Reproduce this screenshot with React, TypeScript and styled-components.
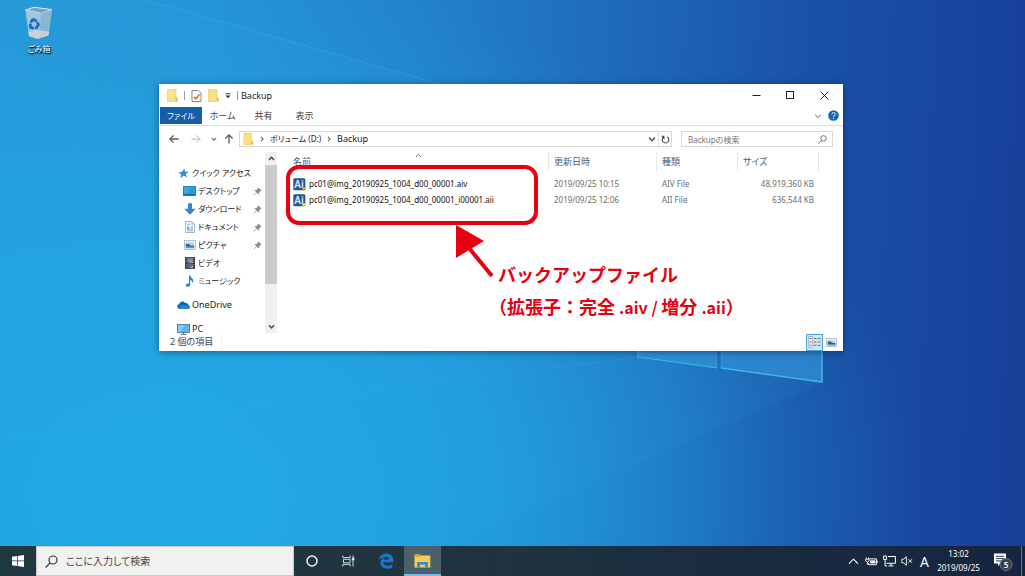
import React from "react";
import styled, { createGlobalStyle } from "styled-components";

const GlobalStyle = createGlobalStyle`
  *, *::before, *::after { box-sizing: border-box; }
  body {
    margin: 0;
    font-family: "Noto Sans", "Noto Sans CJK JP", sans-serif;
    font-size: 8px;
    font-feature-settings: "palt";
    color: #222;
  }
  button, input {
    font: inherit;
    font-feature-settings: inherit;
    color: inherit;
    margin: 0;
    padding: 0;
    border: 0;
    background: none;
  }
  svg { display: block; flex: none; }
`;

/* ---------- desktop ---------- */

const Screen = styled.div`
  position: relative;
  min-height: 100vh;
  display: flex;
  flex-direction: column;
  overflow: hidden;
  background:
    radial-gradient(ellipse 72% 90% at 18% 86%, #20a9e5 0%, rgba(32, 169, 229, 0.7) 45%, rgba(32, 169, 229, 0.2) 80%, rgba(32, 169, 229, 0) 100%),
    linear-gradient(92deg, #2698d8 0%, #2594d6 20%, #2283cb 40%, #1f6dbb 57%, #1a51a7 78%, #173f98 100%);
`;

const Wallpaper = styled.svg`
  position: absolute;
  inset: 0;
  width: 100%;
  height: 100%;
`;

const Desktop = styled.main`
  position: relative;
  flex: 1;
  padding: 84px 182px 40px 159px;
`;

const DesktopIcon = styled.button`
  position: absolute;
  left: 18px;
  top: 6px;
  width: 42px;
  display: flex;
  flex-direction: column;
  align-items: center;
  gap: 3px;
  color: #fff;
  line-height: 12px;
  text-shadow: 0 1px 2px #000, 1px 1px 1px #000;
`;

/* ---------- explorer window ---------- */

const Window = styled.section`
  position: relative;
  display: flex;
  flex-direction: column;
  background: #fff;
  box-shadow: 0 1px 7px rgba(0, 20, 60, 0.5);
`;

const TitleBar = styled.header`
  display: flex;
  align-items: center;
  height: 23px;
  padding: 0 1px 0 8px;
`;

const QuickTools = styled.div`
  display: flex;
  align-items: center;
  gap: 6px;
`;

const Divider = styled.span`
  width: 1px;
  height: 9px;
  background: #999;
`;

const IconButton = styled.button<{ $w?: number; $color?: string }>`
  display: flex;
  align-items: center;
  justify-content: center;
  width: ${(p) => (p.$w ? `${p.$w}px` : "auto")};
  color: ${(p) => p.$color ?? "#5a5a5a"};
`;

const Title = styled.h1`
  flex: 1;
  margin: 0 0 0 3px;
  font-size: 9px;
  font-weight: 400;
  line-height: 14px;
`;

const Ribbon = styled.nav`
  display: flex;
  height: 19px;
  padding: 0 3px 1px 1px;
  border-bottom: 1px solid #dcdcde;
`;

const Tab = styled.button<{ $active?: boolean }>`
  width: ${(p) => (p.$active ? 42 : 41)}px;
  font-size: ${(p) => (p.$active ? 8 : 9)}px;
  line-height: 17px;
  color: ${(p) => (p.$active ? "#fff" : "#444")};
  background: ${(p) => (p.$active ? "#155fa9" : "transparent")};
`;

const Spacer = styled.span`
  flex: 1;
`;

const NavRow = styled.div`
  display: flex;
  align-items: center;
  padding: 5px 10px 5px 6px;
`;

const AddressBar = styled.div`
  flex: 1;
  display: flex;
  align-items: center;
  height: 16px;
  margin-right: 9px;
  padding-left: 3px;
  border: 1px solid #d9d9d9;
  font-size: 8px;
`;

const Crumb = styled.button<{ $latin?: boolean }>`
  font-size: ${(p) => (p.$latin ? 9 : 8)}px;
  line-height: 14px;
  color: #222;
`;

const CrumbArrow = styled.span`
  display: flex;
  justify-content: center;
  width: 16px;
  color: #555;
`;

const RefreshButton = styled(IconButton)`
  height: 14px;
  border-left: 1px solid #e2e2e2;
`;

const SearchBox = styled.label`
  display: flex;
  align-items: center;
  width: 152px;
  height: 16px;
  padding: 0 5px 0 6px;
  border: 1px solid #d9d9d9;
  color: #555;

  input {
    flex: 1;
    min-width: 0;
    height: 14px;
    outline: none;
  }
  input::placeholder { color: #777; opacity: 1; }
`;

const Body = styled.div`
  display: flex;
  height: 181px;
`;

const Sidebar = styled.nav`
  display: flex;
  width: 118px;
  flex: none;
`;

const Tree = styled.ul`
  flex: 1;
  margin: 0;
  padding: 12px 3px 0 18px;
  list-style: none;
`;

const TreeItem = styled.li<{ $nested?: boolean; $gap?: boolean }>`
  display: flex;
  align-items: center;
  height: 18px;
  margin-top: ${(p) => (p.$gap ? 6 : 0)}px;
  padding-left: ${(p) => (p.$nested ? 6 : 0)}px;
`;

const TreeLink = styled.a<{ $latin?: boolean }>`
  flex: 1;
  display: flex;
  align-items: center;
  gap: 2px;
  font-size: ${(p) => (p.$latin ? 9 : 8)}px;
  line-height: 18px;
  color: #222;
  text-decoration: none;
  white-space: nowrap;
`;

const IconSlot = styled.span`
  display: flex;
  justify-content: center;
  width: 13px;
`;

const ScrollTrack = styled.div`
  display: flex;
  flex-direction: column;
  width: 12px;
  background: #f0f0f0;
`;

const ScrollButton = styled.button`
  display: flex;
  align-items: center;
  justify-content: center;
  height: 13px;
  color: #444;
`;

const ScrollThumb = styled.div`
  height: 119px;
  margin-bottom: auto;
  background: #cbcbcb;
`;

const FilePane = styled.div`
  position: relative;
  flex: 1;
  padding: 0 24px 0 11px;
`;

const FileTable = styled.table`
  width: 100%;
  table-layout: fixed;
  border-collapse: separate;
  border-spacing: 0;

  tbody::before {
    content: "";
    display: block;
    height: 5px;
  }
`;

const Head = styled.th<{ $w?: number }>`
  width: ${(p) => (p.$w ? `${p.$w}px` : "auto")};
  height: 19px;
  padding: 0 5px;
  border-right: 1px solid #e6e6e6;
  font-size: 9px;
  font-weight: 400;
  line-height: 19px;
  text-align: left;
  color: #4c607a;
`;

const SortMark = styled.span`
  position: absolute;
  left: 138px;
  top: 0;
  color: #666;
`;

const Cell = styled.td<{ $right?: boolean }>`
  height: 16px;
  padding: 0 5px;
  line-height: 16px;
  text-align: ${(p) => (p.$right ? "right" : "left")};
  color: #6d6d6d;
  white-space: nowrap;
`;

const FileName = styled.a`
  display: flex;
  align-items: center;
  gap: 3px;
  color: #111;
  text-decoration: none;
`;

const StatusBar = styled.footer`
  display: flex;
  align-items: center;
  height: 18px;
  padding: 0 3px 0 11px;
  font-size: 9px;
  color: #33445c;
`;

const StatusText = styled.span`
  padding-right: 8px;
  border-right: 1px solid #eee;
  line-height: 14px;
`;

const ViewButton = styled.button<{ $on?: boolean }>`
  display: flex;
  align-items: center;
  justify-content: center;
  width: 17px;
  height: 17px;
  border: 1px solid ${(p) => (p.$on ? "#4fa6d6" : "transparent")};
  background: ${(p) => (p.$on ? "#cbe8f6" : "transparent")};
`;

/* ---------- callout laid over the file list ---------- */

const Highlight = styled.div`
  position: absolute;
  left: 9px;
  top: 13px;
  width: 252px;
  height: 60px;
  border: 4px solid #e60012;
  border-radius: 13px;
  pointer-events: none;
`;

const Arrow = styled.svg`
  position: absolute;
  left: 177px;
  top: 72px;
`;

const Callout = styled.p`
  position: absolute;
  left: 221px;
  top: 106px;
  margin: 0;
  font-family: "Noto Sans CJK JP", sans-serif;
  font-feature-settings: normal;
  font-size: 18px;
  font-weight: 700;
  line-height: 32px;
  color: #e60012;
  white-space: nowrap;
`;

const CalloutLine = styled.span<{ $outdent?: boolean }>`
  display: block;
  margin-left: ${(p) => (p.$outdent ? -9 : 0)}px;
`;

const Extension = styled.span`
  font-size: 16px;
`;

/* ---------- taskbar ---------- */

const Taskbar = styled.footer`
  position: relative;
  display: flex;
  height: 30px;
  color: #fff;
  background: linear-gradient(90deg, #20383f 0%, #20353f 42%, #1a2c40 70%, #16253f 100%);
`;

const TaskButton = styled.button<{ $active?: boolean; $edge?: boolean }>`
  display: flex;
  align-items: center;
  justify-content: center;
  width: ${(p) => (p.$edge ? 36 : 37)}px;
  background: ${(p) => (p.$active ? "#4b6069" : "transparent")};
  box-shadow: ${(p) => (p.$active ? "inset 0 -2px 0 #76b9ed" : "none")};
`;

const TaskSearch = styled.label`
  display: flex;
  align-items: center;
  gap: 8px;
  width: 258px;
  padding: 0 8px;
  border: 1px solid #c9c9c9;
  background: #f1f1f0;
  color: #333;

  input {
    flex: 1;
    min-width: 0;
    height: 20px;
    font-size: 10px;
    outline: none;
  }
  input::placeholder { color: #444; opacity: 1; }
`;

const Tray = styled.div`
  display: flex;
  align-items: center;
  margin-left: auto;
`;

const TrayButton = styled.button<{ $w?: number }>`
  display: flex;
  align-items: center;
  justify-content: center;
  width: ${(p) => p.$w ?? 18}px;
  height: 30px;
  font-size: 14px;
`;

const Clock = styled.time`
  width: 51px;
  line-height: 14px;
  text-align: center;
`;

const ShowDesktop = styled.button`
  width: 4px;
  height: 30px;
  border-left: 1px solid #66707f;
`;

/* ---------- drawings ---------- */

const FolderIcon = ({ h = 13 }: { h?: number }) => (
  <svg width="11" height={h} viewBox="0 0 11 13">
    <path d="M0.5 0.5H9V9H10.5V12.5H0.5Z" fill="#f8da7a" />
    <path d="M0.5 0.5H9V11L7.5 12.5H0.5Z" fill="#fbe08a" stroke="#efcc66" strokeWidth="0.7" />
    <path d="M8.6 8.5H10.5V12.5H8.6Z" fill="#e9bd45" />
  </svg>
);

const Chevron = ({ d, s = 7, w = 1.2 }: { d: "up" | "down" | "right"; s?: number; w?: number }) => {
  const path = { up: "M1 5L3.5 2.3L6 5", down: "M1 2.3L3.5 5L6 2.3", right: "M2.3 1L4.8 3.5L2.3 6" }[d];
  return (
    <svg width={s} height={s} viewBox="0 0 7 7" fill="none" stroke="currentColor" strokeWidth={w}>
      <path d={path} />
    </svg>
  );
};

const ArrowIcon = ({ turn = 0 }: { turn?: number }) => (
  <svg width="10" height="10" viewBox="0 0 10 10" fill="none" stroke="currentColor" strokeWidth="1.3">
    <path transform={`rotate(${turn} 5 5)`} d="M9.5 5H1M4.5 1.4L0.9 5L4.5 8.6" />
  </svg>
);

const Magnifier = ({ size }: { size: number }) => (
  <svg width={size} height={size} viewBox="0 0 12 12" fill="none" stroke="currentColor" strokeWidth="1.1">
    <circle cx="7.4" cy="4.6" r="3.7" />
    <path d="M4.8 7.3L0.6 11.5" />
  </svg>
);

const Pin = () => (
  <svg width="9" height="9" viewBox="0 0 8 8">
    <path d="M4.7 0.3L7.7 3.3L6.7 3.6L5.4 5L5.3 6.8L3.4 5L0.5 7.7L0.3 7.5L3 4.6L1.2 2.7L3 2.6L4.4 1.3Z" fill="#84919c" />
  </svg>
);

const Star = () => (
  <svg width="11" height="11" viewBox="0 0 11 11">
    <path d="M6.4 0.4L7.1 3.7L10.8 3.8L7.8 5.9L9 9.6L5.7 7.6L2.2 10.4L3.3 6.4L0.2 4.4L3.9 3.9Z" fill="#2f8fd8" />
  </svg>
);

const DesktopGlyph = () => (
  <svg width="13" height="10" viewBox="0 0 13 10">
    <rect x="0.4" y="0.4" width="12.2" height="9.2" fill="#2a9ad8" stroke="#1672b0" strokeWidth="0.8" />
    <path d="M1 8.7H12" stroke="#105c95" strokeWidth="0.9" />
    <path d="M1 1H9L3 8H1Z" fill="#3aabe4" />
  </svg>
);

const DownloadGlyph = () => (
  <svg width="12" height="12" viewBox="0 0 12 12">
    <path d="M4 0.3H8V5.8H11.8L6 11.8L0.2 5.8H4Z" fill="#3a85cc" />
  </svg>
);

const DocumentGlyph = () => (
  <svg width="10" height="12" viewBox="0 0 10 12">
    <path d="M0.5 0.5H7L9.5 3V11.5H0.5Z" fill="#fbfcfd" stroke="#98a2ab" strokeWidth="0.8" />
    <path d="M7 0.5V3H9.5" fill="none" stroke="#98a2ab" strokeWidth="0.7" />
    <path d="M2 3.2H5.5M2 5.2H4M6 5.2H8M2 9.8H8" stroke="#6da0c8" strokeWidth="0.8" />
    <rect x="2" y="6.3" width="2.4" height="2.3" fill="#5b9bd0" />
    <path d="M5.2 6.8H8M5.2 8.3H8" stroke="#6da0c8" strokeWidth="0.8" />
  </svg>
);

const PictureGlyph = ({ w = 12 }: { w?: number }) => (
  <svg width={w} height={w === 12 ? 10 : 9} viewBox="0 0 12 10" preserveAspectRatio="none">
    <rect x="0.5" y="0.5" width="11" height="9" fill="#fff" stroke="#a4acb4" strokeWidth="0.8" />
    <rect x="1.8" y="1.8" width="8.4" height="6.4" fill="#b5daf2" />
    <path d="M1.8 3.8L4.5 4L7 5.4L10.2 5.6V6.8H1.8Z" fill="#2f5f70" />
    <path d="M1.8 6.6L10.2 6.4V8.2H1.8Z" fill="#5a92cc" />
  </svg>
);

const VideoGlyph = () => (
  <svg width="10" height="12" viewBox="0 0 10 12">
    <rect width="10" height="12" fill="#2f3438" />
    <rect x="2.2" y="0.6" width="5.7" height="5" fill="#5a86c4" />
    <rect x="2.2" y="6.3" width="5.7" height="5.1" fill="#4a6ca4" />
    <path d="M4 5.5L5.5 2.5L7.9 3.6V5.5ZM4.6 11.3L7.9 8V11.3Z" fill="#d99a3c" />
    <path d="M1.1 1V11.5M8.9 1V11.5" stroke="#d5d5d5" strokeWidth="0.7" strokeDasharray="1 1" />
  </svg>
);

const MusicGlyph = () => (
  <svg width="9" height="12" viewBox="0 0 9 12">
    <path d="M4 0.3H5.2C5.4 2.5 8.8 3.4 8.2 7L7.4 8.3C7.5 6 6.3 5.2 5.2 4.8V9.6C5.2 11.4 3.6 12 2.3 11.8C0.6 11.5 0.3 9.9 1.4 9C2.2 8.4 3.2 8.4 4 8.8Z" fill="#2688d2" />
  </svg>
);

const CloudGlyph = () => (
  <svg width="13" height="8" viewBox="0 0 13 8">
    <path d="M3 7.8C-0.6 7.8 -0.5 3.6 2.2 3.2C2.7 0.6 6.6 -0.6 8.4 2.2C10.2 1.8 11.3 3 11.3 4.1C13.4 4.4 13.4 7.8 11 7.8Z" fill="#0f66b8" />
    <path d="M3 7.8C2 7 2.6 4.8 4.8 4.4C6.6 3.2 8.3 4 9 4.9C11 4.2 12.6 5.2 12.6 6.4C12.4 7.4 11.8 7.8 11 7.8Z" fill="#1d84d6" />
  </svg>
);

const PcGlyph = () => (
  <svg width="13" height="11" viewBox="0 0 13 11">
    <rect x="0.4" y="0.4" width="12.2" height="8" fill="#58b8ea" stroke="#3c6f92" strokeWidth="0.8" />
    <path d="M1 1H8L3.5 8H1Z" fill="#85cdf2" />
    <path d="M3.5 10.3H9.5M6.5 8.5V10" stroke="#5b6e7a" strokeWidth="1" />
  </svg>
);

const BackupFileIcon = ({ badge }: { badge: string }) => (
  <svg width="13" height="13" viewBox="0 0 13 13">
    <rect x="0.3" y="0.3" width="12" height="12" rx="1.4" fill="#2153a3" />
    <text x="1.2" y="10" fontFamily="Noto Sans, sans-serif" fontSize="10" fontWeight="600" fill="#dfeaf8">Ai</text>
    <circle cx="10.9" cy="10.8" r="1.9" fill={badge} />
  </svg>
);

const RecycleBin = () => (
  <svg width="30" height="34" viewBox="0 0 30 34">
    <path d="M1.5 4L10 1L28 3.5L24.5 29.5L13 33L5 30Z" fill="#b4cfdf" opacity="0.6" />
    <path d="M1.5 4L10 1.3L28 3.6L17.5 7.3Z" fill="#6fa6c6" stroke="#e2f0f7" strokeWidth="0.9" />
    <path d="M1.5 4L17.5 7.3L15 32.6L5 30Z" fill="#a9cbdf" opacity="0.75" />
    <path d="M17.5 7.3L28 3.6L24.5 29.5L15 32.6Z" fill="#8bb4cd" opacity="0.85" />
    <path d="M4.5 26L13 24L25.2 25.5L24.5 29.5L13.5 32.8L5 30Z" fill="#d3d3d5" opacity="0.9" />
    <g fill="none" stroke="#176fc1" strokeWidth="2.8">
      <path d="M6.7 16.5L8.6 13.7L11.5 14.4" />
      <path d="M13.2 16L14.4 19L12.4 21.6" />
      <path d="M10 22.3L6.6 21.4L6 18.8" />
    </g>
    <path d="M10.6 12L13.8 14.7L11.3 16.4ZM14.2 23.4L10.3 22.8L12 19.8ZM4.3 20L6.2 16.8L8.4 19.3Z" fill="#176fc1" />
  </svg>
);

const treeItems = [
  { label: "デスクトップ", icon: <DesktopGlyph />, pinned: true },
  { label: "ダウンロード", icon: <DownloadGlyph />, pinned: true },
  { label: "ドキュメント", icon: <DocumentGlyph />, pinned: true },
  { label: "ピクチャ", icon: <PictureGlyph />, pinned: true },
  { label: "ビデオ", icon: <VideoGlyph />, pinned: false },
  { label: "ミュージック", icon: <MusicGlyph />, pinned: false },
];

const files = [
  { name: "pc01@img_20190925_1004_d00_00001.aiv", date: "2019/09/25 10:15", type: "AIV File", size: "48,919,360 KB", badge: "#e0913a" },
  { name: "pc01@img_20190925_1004_d00_00001_i00001.aii", date: "2019/09/25 12:06", type: "AII File", size: "636,544 KB", badge: "#e8d83c" },
];

export default function App() {
  return (
    <Screen>
      <GlobalStyle />
      <Wallpaper viewBox="0 0 1025 576" preserveAspectRatio="none" aria-hidden="true">
        <defs>
          <linearGradient id="beam" x1="1" y1="0" x2="0" y2="0">
            <stop offset="0" stopColor="#4cc0f2" stopOpacity="0.15" />
            <stop offset="1" stopColor="#4cc0f2" stopOpacity="0.05" />
          </linearGradient>
          <linearGradient id="pane" x1="0" y1="0" x2="1" y2="0">
            <stop offset="0" stopColor="#35a4e0" stopOpacity="0.5" />
            <stop offset="1" stopColor="#3a9ce0" stopOpacity="0.6" />
          </linearGradient>
        </defs>
        <path d="M638 357L0 440V576H380L822 383Z" fill="url(#beam)" opacity="0.35" />
        <path d="M640 140V357L0 440V0H145Z" fill="url(#beam)" opacity="0.4" />
        <path d="M145 0L440 84" stroke="#6cc4f0" strokeOpacity="0.2" strokeWidth="1.2" />
        <path d="M638 357L0 440" stroke="#6cd0f5" strokeOpacity="0.08" strokeWidth="1.5" />
        <path d="M638 230H717V368L638 357Z" fill="url(#pane)" stroke="#4aa8e0" strokeOpacity="0.5" />
        <path d="M721 220H822V382L721 368Z" fill="url(#pane)" stroke="#4aa8e0" strokeOpacity="0.5" />
        <path d="M638 340V357L717 368" fill="none" stroke="#45d2ee" strokeOpacity="0.5" strokeWidth="1.2" />
        <path d="M721 368L822 382V340" fill="none" stroke="#45c8f0" strokeOpacity="0.7" strokeWidth="1.6" />
      </Wallpaper>

      <Desktop>
        <DesktopIcon type="button">
          <RecycleBin />
          ごみ箱
        </DesktopIcon>

        <Window aria-label="Backup">
          <TitleBar>
            <QuickTools>
              <FolderIcon />
              <Divider />
              <IconButton type="button" aria-label="プロパティ">
                <svg width="11" height="12" viewBox="0 0 11 12">
                  <path d="M1 0.5H7.6L10 2.9V11.5H1Z" fill="#fff" stroke="#7a7a7a" strokeWidth="0.9" />
                  <path d="M3 6.8L4.8 8.8L8.4 4.4" fill="none" stroke="#e0622b" strokeWidth="1.5" />
                </svg>
              </IconButton>
              <IconButton type="button" aria-label="新しいフォルダー">
                <FolderIcon />
              </IconButton>
              <IconButton type="button" $w={6} aria-label="カスタマイズ">
                <svg width="6" height="6" viewBox="0 0 6 6">
                  <path d="M0.5 0.8H5.5" stroke="#333" />
                  <path d="M0.5 2.5H5.5L3 5.3Z" fill="#333" />
                </svg>
              </IconButton>
              <Divider />
            </QuickTools>
            <Title>Backup</Title>
            <IconButton type="button" $w={34} aria-label="最小化">
              <svg width="9" height="9" viewBox="0 0 9 9"><path d="M0.5 4.5H8.5" stroke="#222" /></svg>
            </IconButton>
            <IconButton type="button" $w={34} aria-label="最大化">
              <svg width="9" height="9" viewBox="0 0 9 9"><rect x="0.5" y="0.5" width="7" height="7" fill="none" stroke="#222" /></svg>
            </IconButton>
            <IconButton type="button" $w={35} aria-label="閉じる">
              <svg width="9" height="9" viewBox="0 0 9 9"><path d="M0.6 0.6L8.4 8.4M8.4 0.6L0.6 8.4" stroke="#222" strokeWidth="1" /></svg>
            </IconButton>
          </TitleBar>

          <Ribbon>
            <Tab type="button" $active>ファイル</Tab>
            <Tab type="button">ホーム</Tab>
            <Tab type="button">共有</Tab>
            <Tab type="button">表示</Tab>
            <Spacer />
            <IconButton type="button" $w={18} $color="#999" aria-label="リボンの展開">
              <Chevron d="down" s={8} w={0.9} />
            </IconButton>
            <IconButton type="button" $w={13} aria-label="ヘルプ">
              <svg width="11" height="11" viewBox="0 0 11 11">
                <circle cx="5.5" cy="5.5" r="5.3" fill="#1668b5" />
                <path d="M3.9 4.2C3.9 2 7.2 2 7.2 4.1C7.2 5.3 5.6 5.2 5.6 6.8M5.6 7.8V8.9" fill="none" stroke="#fff" strokeWidth="1" />
              </svg>
            </IconButton>
          </Ribbon>

          <NavRow>
            <IconButton type="button" $w={18} aria-label="戻る"><ArrowIcon /></IconButton>
            <IconButton type="button" $w={26} $color="#ccc" aria-label="進む"><ArrowIcon turn={180} /></IconButton>
            <IconButton type="button" $w={10} aria-label="最近の場所"><Chevron d="down" s={6} /></IconButton>
            <IconButton type="button" $w={20} aria-label="上へ"><ArrowIcon turn={90} /></IconButton>
            <AddressBar>
              <FolderIcon h={12} />
              <CrumbArrow><Chevron d="right" s={6} /></CrumbArrow>
              <Crumb type="button">ボリューム (D:)</Crumb>
              <CrumbArrow><Chevron d="right" s={6} /></CrumbArrow>
              <Crumb type="button" $latin>Backup</Crumb>
              <Spacer />
              <IconButton type="button" $w={12} aria-label="履歴"><Chevron d="down" s={8} w={1.3} /></IconButton>
              <RefreshButton type="button" $w={13} aria-label="更新">
                <svg width="9" height="9" viewBox="0 0 9 9" fill="none" stroke="#444" strokeWidth="1.1">
                  <path d="M6.2 1.8A3.3 3.3 0 1 1 2.8 1.8M2.9 4V1.3H0.6" />
                </svg>
              </RefreshButton>
            </AddressBar>
            <SearchBox>
              <input type="text" aria-label="Backupの検索" placeholder="Backupの検索" />
              <Magnifier size={9} />
            </SearchBox>
          </NavRow>

          <Body>
            <Sidebar>
              <Tree>
                <TreeItem>
                  <TreeLink href="#quick"><IconSlot><Star /></IconSlot>クイック アクセス</TreeLink>
                </TreeItem>
                {treeItems.map((item) => (
                  <TreeItem key={item.label} $nested>
                    <TreeLink href="#folder"><IconSlot>{item.icon}</IconSlot>{item.label}</TreeLink>
                    {item.pinned && <Pin />}
                  </TreeItem>
                ))}
                <TreeItem $gap>
                  <TreeLink href="#onedrive" $latin><IconSlot><CloudGlyph /></IconSlot>OneDrive</TreeLink>
                </TreeItem>
                <TreeItem $gap>
                  <TreeLink href="#pc" $latin><IconSlot><PcGlyph /></IconSlot>PC</TreeLink>
                </TreeItem>
              </Tree>
              <ScrollTrack>
                <ScrollButton type="button" aria-label="上にスクロール"><Chevron d="up" w={1.4} /></ScrollButton>
                <ScrollThumb />
                <ScrollButton type="button" aria-label="下にスクロール"><Chevron d="down" w={1.4} /></ScrollButton>
              </ScrollTrack>
            </Sidebar>

            <FilePane>
              <FileTable>
                <thead>
                  <tr>
                    <Head>名前</Head>
                    <Head $w={108}>更新日時</Head>
                    <Head $w={81}>種類</Head>
                    <Head $w={81}>サイズ</Head>
                  </tr>
                </thead>
                <tbody>
                  {files.map((f) => (
                    <tr key={f.name}>
                      <Cell><FileName href="#file"><BackupFileIcon badge={f.badge} />{f.name}</FileName></Cell>
                      <Cell>{f.date}</Cell>
                      <Cell>{f.type}</Cell>
                      <Cell $right>{f.size}</Cell>
                    </tr>
                  ))}
                </tbody>
              </FileTable>
              <SortMark><Chevron d="up" s={7} w={0.9} /></SortMark>
              <Highlight />
              <Arrow width="42" height="54" viewBox="0 0 42 54" fill="#e60012">
                <path d="M2 1L30 17L2 34Z" />
                <path d="M15 24L38 52" stroke="#e60012" strokeWidth="4" />
              </Arrow>
              <Callout>
                <CalloutLine>バックアップファイル</CalloutLine>
                <CalloutLine $outdent>
                  （拡張子：完全 <Extension>.aiv / </Extension>増分 <Extension>.aii</Extension>）
                </CalloutLine>
              </Callout>
            </FilePane>
          </Body>

          <StatusBar>
            <StatusText>2 個の項目</StatusText>
            <Spacer />
            <ViewButton type="button" $on aria-label="詳細">
              <svg width="13" height="12" viewBox="0 0 13 12">
                <path d="M0.8 0.5H4.2V11.5H0.8Z" fill="#f5f8fa" stroke="#8d9aa4" strokeWidth="0.7" />
                <path d="M1.7 2.5H3.3M1.7 6H3.3" stroke="#668" />
                <path d="M1.7 9.3H3.3" stroke="#c66" />
                <path d="M5.5 2.5H8.5M9.7 2.5H12.5M5.5 6H8.5M9.7 6H12.5M5.5 9.3H8.5M9.7 9.3H12.5" stroke="#667785" />
              </svg>
            </ViewButton>
            <ViewButton type="button" aria-label="大アイコン"><PictureGlyph w={11} /></ViewButton>
          </StatusBar>
        </Window>
      </Desktop>

      <Taskbar>
        <TaskButton type="button" $edge aria-label="スタート">
          <svg width="12" height="12" viewBox="0 0 12 12" fill="#fff">
            <path d="M0 1.7L5 1V5.6H0ZM5.7 0.9L12 0V5.6H5.7ZM0 6.3H5V11L0 10.3ZM5.7 6.3H12V12L5.7 11.1Z" />
          </svg>
        </TaskButton>
        <TaskSearch>
          <Magnifier size={13} />
          <input type="text" aria-label="検索" placeholder="ここに入力して検索" />
        </TaskSearch>
        <TaskButton type="button" $edge aria-label="Cortana">
          <svg width="12" height="12" viewBox="0 0 12 12"><circle cx="6" cy="6" r="5" fill="none" stroke="#f2f2f2" strokeWidth="1.5" /></svg>
        </TaskButton>
        <TaskButton type="button" aria-label="タスク ビュー">
          <svg width="13" height="12" viewBox="0 0 13 12" fill="none" stroke="#e6e6e6">
            <path d="M0.8 0.5V2.6H8.2V0.5M0.8 11.5V9.4H8.2V11.5M1.5 4.3H8.1V7.8H1.5ZM11 0.5V11.5" strokeWidth="0.9" />
            <path d="M9.8 4H12.4" strokeWidth="2.4" />
          </svg>
        </TaskButton>
        <TaskButton type="button" aria-label="Edge">
          <svg width="16" height="16" viewBox="0 0 16 16">
            <path d="M0.5 7.2C1.2 2.8 4.2 0.4 8.2 0.4C12.7 0.4 15.4 3.5 15.4 7.9V9.3H5.4C5.6 11.8 7.7 12.8 10 12.8C11.9 12.8 13.2 12.3 14.3 11.6V14.5C12.9 15.3 11.2 15.7 9.3 15.7C5 15.7 2.4 13.1 2.4 9.8C2.4 7.4 3.6 5.5 5.9 4.4C3.3 4.5 1.6 5.6 0.5 7.2ZM5.5 6.6H10.9C10.9 4.9 10 3.8 8.3 3.8C6.8 3.8 5.7 4.9 5.5 6.6Z" fill="#1976ca" />
          </svg>
        </TaskButton>
        <TaskButton type="button" $active aria-label="エクスプローラー">
          <svg width="17" height="14" viewBox="0 0 17 14">
            <path d="M0.5 0.5H6L7.3 1.6H16.3V13.5H0.5Z" fill="#f7cb57" />
            <path d="M0.5 0.5H6L7.3 1.6L6 2.8H0.5Z" fill="#dc9f21" />
            <path d="M3 8H14V13.5H11V10.7H6V13.5H3Z" fill="#2f8fd8" />
            <path d="M0.5 12.8H3V13.5H0.5ZM14 12.8H16.3V13.5H14Z" fill="#dfab35" />
          </svg>
        </TaskButton>
        <Tray>
          <TrayButton type="button" aria-label="隠れているインジケーター">
            <svg width="11" height="11" viewBox="0 0 11 11" fill="none" stroke="#fff" strokeWidth="1.1"><path d="M1 7.7L5.5 3.2L10 7.7" /></svg>
          </TrayButton>
          <TrayButton type="button" aria-label="電源">
            <svg width="13" height="9" viewBox="0 0 13 9" fill="none" stroke="#fff">
              <path d="M4.5 1.9H11.4V7.7H3.5V6" strokeWidth="1" />
              <path d="M5.4 3.8H10V6H5.4Z" fill="#fff" strokeWidth="0.8" />
              <path d="M1.3 0.5V2M3.5 0.5V2M0.7 2.2H4.1V4L2.4 5.2L0.7 4ZM2.4 5V7.8M12.4 3.8V5.8" strokeWidth="0.9" />
            </svg>
          </TrayButton>
          <TrayButton type="button" aria-label="ネットワーク">
            <svg width="13" height="12" viewBox="0 0 13 12" fill="none" stroke="#fff" strokeWidth="1">
              <path d="M5 1.5H12.4V8.3H3.5M8 8.3V10.8M5.5 10.9H10.4" />
              <path d="M0.6 1H3.6V4.4H0.6ZM2.1 4.4V11H4" />
            </svg>
          </TrayButton>
          <TrayButton type="button" aria-label="音量">
            <svg width="12" height="10" viewBox="0 0 12 10" fill="none" stroke="#fff" strokeWidth="0.9">
              <path d="M0.8 3.2H2.6L5.4 0.8V9.2L2.6 6.8H0.8ZM7.5 3.2L11 6.8M11 3.2L7.5 6.8" />
            </svg>
          </TrayButton>
          <TrayButton type="button" $w={17}>A</TrayButton>
          <Clock>13:02<br />2019/09/25</Clock>
          <TrayButton type="button" $w={37} aria-label="通知">
            <svg width="20" height="20" viewBox="0 0 20 20">
              <path d="M1 2.5H13V12.5H7.5L5 15V12.5H1Z" fill="#fff" />
              <path d="M3 5.3H11M3 7.6H11M3 9.9H8" stroke="#26354c" strokeWidth="1" />
              <circle cx="13" cy="13.5" r="6" fill="#3a4048" stroke="#757b84" strokeWidth="0.9" />
              <text x="13" y="16.6" textAnchor="middle" fontFamily="Noto Sans, sans-serif" fontSize="8" fontWeight="600" fill="#fff">5</text>
            </svg>
          </TrayButton>
          <ShowDesktop type="button" aria-label="デスクトップの表示" />
        </Tray>
      </Taskbar>
    </Screen>
  );
}
